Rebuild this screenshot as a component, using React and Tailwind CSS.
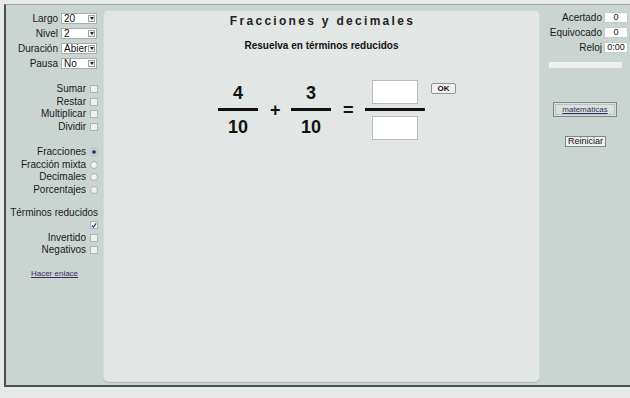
import React from 'react'

const font = { fontFamily: '"Liberation Sans", Arial, sans-serif' }

function Select({ value }) {
  return (
    <div className="flex items-center w-[36px] h-[11px] bg-white border border-[#a7afad] pl-[2px] pr-[1px] overflow-hidden">
      <span className="flex-1 text-[10px] leading-[10px] text-[#111] overflow-hidden whitespace-nowrap">{value}</span>
      <span className="flex items-center justify-center w-[7px] h-[7px] border border-[#9ba3a1] bg-[#eef0ef]">
        <span className="w-0 h-0 border-x-[2px] border-x-transparent border-t-[3px] border-t-[#222]" />
      </span>
    </div>
  )
}

function Check({ checked }) {
  return (
    <span className="flex items-center justify-center w-[8px] h-[8px] border border-[#adb5b3] bg-[#eef1f0]">
      {checked && (
        <svg width="7" height="7" viewBox="0 0 7 7">
          <path d="M1 3.6 L2.8 5.4 L6 1" fill="none" stroke="#1d2e6b" strokeWidth="1.2" />
        </svg>
      )}
    </span>
  )
}

function Radio({ checked }) {
  return (
    <span className="flex items-center justify-center w-[8px] h-[8px] rounded-full border border-[#aab2b0] bg-[#eef1f0]">
      {checked && <span className="w-[4px] h-[4px] rounded-full bg-[#2b3f7a]" />}
    </span>
  )
}

function Row({ label, children, h = 'h-[12.5px]' }) {
  return (
    <div className={`flex items-center justify-end gap-[4px] ${h}`}>
      {label && <span className="text-[10px] leading-[10px] text-[#1a1a1a]">{label}</span>}
      {children}
    </div>
  )
}

function Fraction({ top, bottom }) {
  return (
    <div className="flex flex-col items-center w-[40px]">
      <div className="h-[20px] leading-[20px] text-[18px] font-bold text-[#111]">{top}</div>
      <div className="mt-[5px] w-[40px] h-[3px] bg-[#111]" />
      <div className="mt-[6px] h-[20px] leading-[20px] text-[18px] font-bold text-[#111]">{bottom}</div>
    </div>
  )
}

export default function App() {
  return (
    <div className="w-[630px] h-[398px] bg-[#e6e9e7] pt-[4px] pl-[4px] overflow-hidden" style={font}>
      <div className="flex w-[626px] h-[383px] bg-[#cad4d1] border-l-2 border-b-2 border-t border-l-[#48524f] border-b-[#48524f] border-t-[#9ea8a5]">
        {/* left controls */}
        <div className="w-[97px] pt-[6px] pr-[5px] flex flex-col">
          <div className="flex flex-col pr-[1px]">
            {[['Largo', '20'], ['Nivel', '2'], ['Duración', 'Abier'], ['Pausa', 'No']].map(([l, v]) => (
              <div key={l} className="flex items-center justify-end gap-[3px] h-[15px]">
                <span className="text-[10px] leading-[10px] text-[#1a1a1a]">{l}</span>
                <Select value={v} />
              </div>
            ))}
          </div>
          <div className="mt-[12px]">
            {['Sumar', 'Restar', 'Multiplicar', 'Dividir'].map((l) => (
              <Row key={l} label={l}><Check /></Row>
            ))}
          </div>
          <div className="mt-[13px]">
            {['Fracciones', 'Fracción mixta', 'Decimales', 'Porcentajes'].map((l, i) => (
              <Row key={l} label={l}><Radio checked={i === 0} /></Row>
            ))}
          </div>
          <div className="mt-[10.5px]">
            <Row label="Términos reducidos" />
            <Row><Check checked /></Row>
            <Row label="Invertido"><Check /></Row>
            <Row label="Negativos"><Check /></Row>
          </div>
          <div className="mt-[11px] pl-[5px] text-center text-[8px] leading-[12px] text-[#3a2f5e] underline">Hacer enlace</div>
        </div>

        {/* center panel */}
        <div className="mt-[5px] w-[437px] h-[372px] bg-[#e2e7e5] rounded-[5px] border border-[#d3dad8] shadow-[0_1px_1px_rgba(0,0,0,0.12)] flex flex-col items-center">
          <div className="mt-[3px] text-[12px] leading-[14px] font-bold tracking-[2.3px] text-[#222] pl-[2px]">Fracciones y decimales</div>
          <div className="mt-[12px] text-[10px] leading-[12px] font-bold text-[#111]">Resuelva en términos reducidos</div>
          <div className="mt-[28px] self-start ml-[114px] flex items-center">
            <Fraction top="4" bottom="10" />
            <div className="ml-[12px] w-[10px] text-[18px] font-bold leading-[20px] text-[#111] text-center">+</div>
            <div className="ml-[11px]"><Fraction top="3" bottom="10" /></div>
            <div className="ml-[12px] w-[10px] text-[18px] font-bold leading-[20px] text-[#111] text-center">=</div>
            <div className="ml-[12px] flex flex-col items-center w-[60px]">
              <div className="w-[46px] h-[24px] bg-white border border-[#b6bebc]" />
              <div className="mt-[4px] w-[60px] h-[3px] bg-[#111]" />
              <div className="mt-[5px] w-[46px] h-[24px] bg-white border border-[#b6bebc]" />
            </div>
            <div className="self-start mt-[3px] ml-[6px] w-[25px] h-[11px] flex items-center justify-center bg-[#f1f2f1] border border-[#8e9694] rounded-[2px] text-[8px] font-bold leading-[8px] text-[#111]">OK</div>
          </div>
        </div>

        {/* right panel */}
        <div className="flex-1 pt-[5px] flex flex-col">
          <div className="flex flex-col items-end pr-[2px]">
            {[['Acertado', '0'], ['Equivocado', '0'], ['Reloj', '0:00']].map(([l, v]) => (
              <div key={l} className="flex items-center gap-[2px] h-[15px]">
                <span className="text-[10px] leading-[10px] text-[#1a1a1a]">{l}</span>
                <span className="w-[24px] h-[11px] bg-white border border-[#c4cbc9] flex items-center justify-center text-[9px] leading-[9px] text-[#111]">{v}</span>
              </div>
            ))}
          </div>
          <div className="mt-[7px] ml-[9px] w-[73px] h-[6px] bg-[#edf0ef]" />
          <div className="mt-[34px] ml-[13px] w-[64px] h-[15px] border border-[#7d8785] bg-[#d9e0de] p-[1px]">
            <div className="w-full h-full border border-[#b9c2c0] flex items-center justify-center text-[8px] leading-[8px] text-[#333355] underline">matemáticas</div>
          </div>
          <div className="mt-[19px] ml-[25px] w-[41px] h-[11px] bg-[#eef0ef] border border-[#7f8a88] flex items-center justify-center text-[9px] leading-[9px] text-[#111]">Reiniciar</div>
        </div>
      </div>
    </div>
  )
}
